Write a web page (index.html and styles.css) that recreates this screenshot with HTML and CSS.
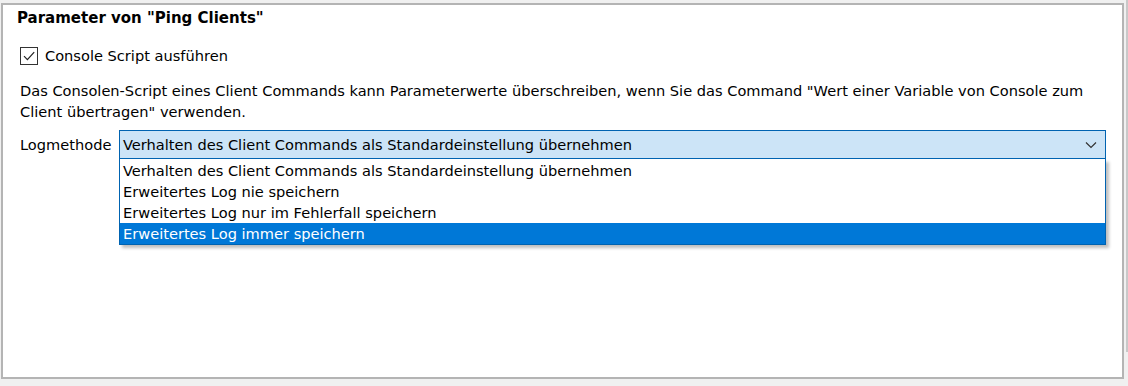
FILE: index.html
```html
<!DOCTYPE html>
<html lang="de">
<head>
    <meta charset="UTF-8">
    <title>Parameter von "Ping Clients"</title>
    <link rel="stylesheet" href="styles.css">
</head>
<body>
    <div class="window">
        <div class="panel">
            <h1 class="title">Parameter von "Ping Clients"</h1>
            <label class="check">
                <span class="box">
                    <svg width="16" height="16" viewBox="0 0 16 16"><path d="M3 8.2 L6.4 11.6 L13.2 4.2" fill="none" stroke="#222" stroke-width="1.2"/></svg>
                </span>
                Console Script ausführen
            </label>
            <p class="note">Das Consolen-Script eines Client Commands kann Parameterwerte überschreiben, wenn Sie das Command "Wert einer Variable von Console zum Client übertragen" verwenden.</p>
            <div class="field">
                <span class="field-label">Logmethode</span>
                <div class="combo">
                    <div class="combo-value">
                        <span>Verhalten des Client Commands als Standardeinstellung übernehmen</span>
                        <svg width="12" height="8" viewBox="0 0 12 8"><path d="M1 1.5 L6 6.5 L11 1.5" fill="none" stroke="#333" stroke-width="1.2"/></svg>
                    </div>
                    <ul class="combo-list">
                        <li>Verhalten des Client Commands als Standardeinstellung übernehmen</li>
                        <li>Erweitertes Log nie speichern</li>
                        <li>Erweitertes Log nur im Fehlerfall speichern</li>
                        <li class="selected">Erweitertes Log immer speichern</li>
                    </ul>
                </div>
            </div>
        </div>
        <div class="scroll"><div class="thumb"></div></div>
    </div>
</body>
</html>
```

FILE: styles.css
```css
body {
    margin: 0;
    background-color: #f0f0f0;
    font-family: "DejaVu Sans", Tahoma, sans-serif;
    font-size: 14.6px;
    color: #000;
}
.window {
    display: flex;
    height: 386px;
    padding-top: 3px;
    box-sizing: border-box;
}
.panel {
    margin-left: 1px;
    width: 1123px;
    height: 376px;
    box-sizing: border-box;
    background: #fff;
    border: 2px solid #b4b4b4;
    padding: 3px 15px 0 17px;
}
.scroll {
    margin-left: 2px;
    margin-top: -3px;
    width: 2px;
}
.thumb {
    height: 352px;
    background: #c8c8c8;
}
.title {
    margin: 0 0 0 -3px;
    font-size: 15px;
    font-weight: bold;
    line-height: 20px;
}
.check {
    display: flex;
    align-items: center;
    gap: 7px;
    margin-top: 19px;
    line-height: 18px;
}
.box {
    width: 16px;
    height: 16px;
    border: 1px solid #333;
    display: flex;
}
.note {
    margin: 15px 0 0 0;
    line-height: 21px;
    padding-right: 10px;
}
.field {
    display: flex;
    align-items: center;
    margin-top: 8px;
}
.field-label {
    width: 99px;
    flex-shrink: 0;
}
.combo {
    position: relative;
    width: 987px;
    flex-shrink: 0;
}
.combo-value {
    display: flex;
    justify-content: space-between;
    align-items: center;
    height: 29px;
    box-sizing: border-box;
    border: 1px solid #0063b1;
    background: #cce4f7;
    padding: 0 8px 0 3px;
}
.combo-list {
    position: absolute;
    top: 29px;
    left: 0;
    right: 0;
    margin: 0;
    padding: 1px 0 0 0;
    list-style: none;
    background: #fff;
    border: 1px solid #0063b1;
    border-top: 0;
    box-shadow: 3px 3px 3px rgba(0, 0, 0, 0.25);
}
.combo-list li {
    line-height: 21px;
    padding-left: 3px;
}
.combo-list li.selected {
    background: #0078d7;
    color: #fff;
}
```
